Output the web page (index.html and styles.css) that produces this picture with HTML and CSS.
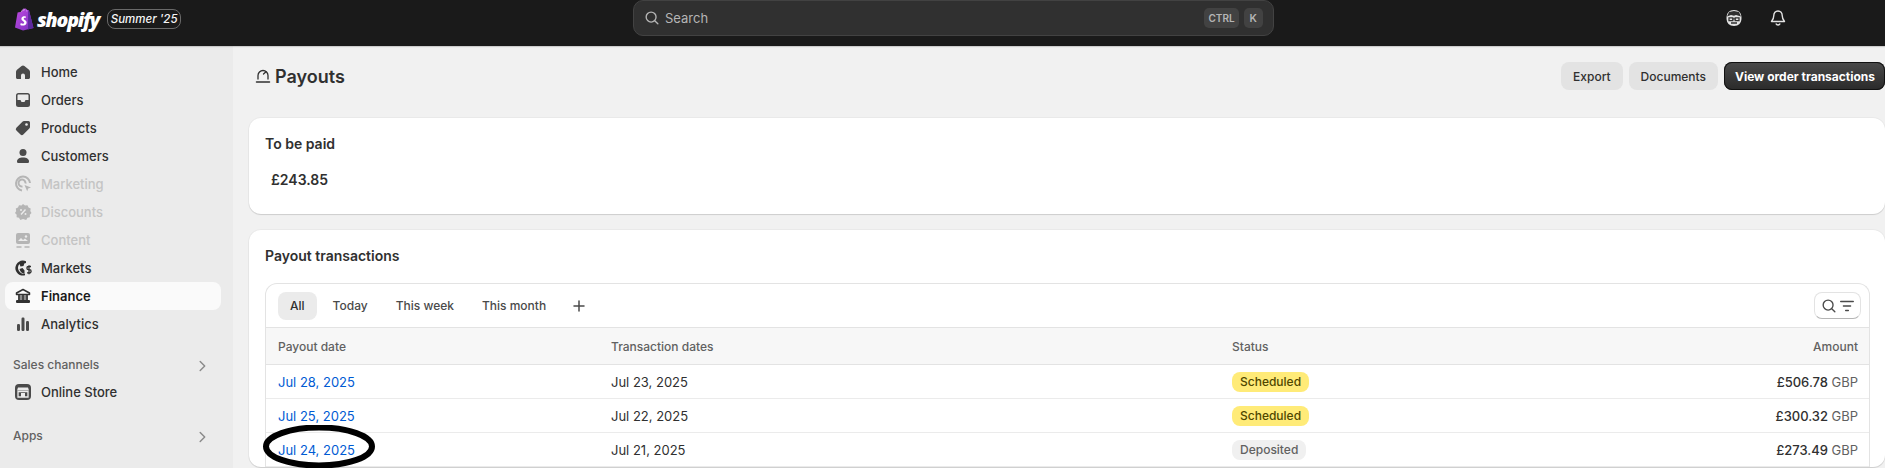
FILE: index.html
```html
<!DOCTYPE html>
<html>
<head>
    <title>Payouts</title>
    <link rel="stylesheet" href="styles.css">
</head>
<body>
    <header class="topbar">
        <div class="brand">
            <svg class="bag" viewBox="0 0 20 23" width="20" height="23">
                <defs>
                    <linearGradient id="bagFill" x1="0" y1="0" x2="1" y2="1">
                        <stop offset="0" stop-color="#c04be0"/>
                        <stop offset="1" stop-color="#7a2fc0"/>
                    </linearGradient>
                </defs>
                <path d="M1 19.500 3.600 4.600c2-.7 3.300-1 4-1.200C8.500 1.500 9.800.5 11 .5c1 0 1.700.6 2.200 1.500l1 .1c.4 0 .7.200.8.500L19.500 20 9 22.500z" fill="url(#bagFill)"/>
                <path d="M14.200 2.100 15 2.600 19.500 20 14 21.500z" fill="#5d2a9e"/>
                <path d="M7.500 4c.3-1.700 1.500-3 2.700-3M9.500 3c.3-.8.800-1.500 1.400-1.700M12.300 1.800c.4.600.6 1.200.6 1.800" fill="none" stroke="#d9a6ee" stroke-width=".8"/>
                <path d="M11.800 8.600c-.7-.4-3.800-.8-4.400 1.800-.4 2.500 3.400 2.900 2.800 4.600-.3 1-2.100.8-3.400 0l-.5 2c1.800 1 5.700 1 6.300-2.100.5-2.900-3.200-3-2.900-4.500.2-.8 1.400-.7 2.100-.3z" fill="#fff"/>
            </svg>
            <span class="wordmark">shopify</span>
            <span class="edition">Summer '25</span>
        </div>
        <div class="search">
            <svg viewBox="0 0 20 20" width="18" height="18" fill="none" stroke="#b5b5b5" stroke-width="1.500" stroke-linecap="round"><circle cx="9" cy="9" r="5.500"/><path d="m13 13 3.500 3.500"/></svg>
            <span class="search-label">Search</span>
            <span class="key key-ctrl">CTRL</span>
            <span class="key">K</span>
        </div>
        <div class="top-icons">
            <svg viewBox="0 0 20 20" width="20" height="20"><path d="M10 2c4.600 0 7.500 2.800 7.500 8s-2.900 8-7.500 8-7.500-2.800-7.500-8 2.900-8 7.500-8z" fill="#e3e3e3"/><path d="M3 8.500 5 4l5-1 5 1 2 4.500-5-1.500-2 .8-3-.8z" fill="#303030"/><path d="M5 9.800h3.800v2.800H5zM11.200 9.800H15v2.800h-3.800zM8.800 10.800h2.400M7 15h6" fill="none" stroke="#303030" stroke-width="1.300"/></svg>
            <svg viewBox="0 0 20 20" width="20" height="20" fill="none" stroke="#e3e3e3" stroke-width="1.400" stroke-linejoin="round" stroke-linecap="round"><path d="M10 3c-2.600 0-4.200 2-4.200 4.500 0 3-.8 4.200-2.300 6h13c-1.500-1.800-2.300-3-2.300-6C14.200 5 12.600 3 10 3z"/><path d="M8.200 16c.4 1.300 3.200 1.300 3.600 0"/></svg>
        </div>
    </header>

    <div class="frame">
        <nav class="sidebar">
            <a class="nav-item">
                <svg viewBox="0 0 20 20" width="20" height="20"><path d="M10 3.500c-.5 0-1 .2-1.400.5L4 7.800c-.6.500-1 1.200-1 2v5.700c0 .8.700 1.500 1.500 1.500H8v-3.500a2 2 0 0 1 4 0V17h3.500c.8 0 1.500-.7 1.500-1.500V9.800c0-.8-.4-1.500-1-2L11.400 4c-.4-.3-.9-.5-1.400-.5z" fill="#4a4a4a"/></svg>
                Home
            </a>
            <a class="nav-item">
                <svg viewBox="0 0 20 20" width="20" height="20"><path d="M5.500 3h9A2.500 2.500 0 0 1 17 5.500v9a2.500 2.500 0 0 1-2.500 2.500h-9A2.500 2.500 0 0 1 3 14.500v-9A2.500 2.500 0 0 1 5.500 3z" fill="#4a4a4a"/><path d="M5.500 4.500h9c.6 0 1 .4 1 1V10H13a1 1 0 0 0-1 1 1 1 0 0 1-1 1H9a1 1 0 0 1-1-1 1 1 0 0 0-1-1H4.500V5.500c0-.6.400-1 1-1z" fill="#ebebeb"/></svg>
                Orders
            </a>
            <a class="nav-item">
                <svg viewBox="0 0 20 20" width="20" height="20"><path d="M11 3h4.500A1.500 1.500 0 0 1 17 4.500V9c0 .6-.2 1.200-.7 1.600l-6 6a2 2 0 0 1-2.800 0l-4.100-4.100a2 2 0 0 1 0-2.800l6-6C9.800 3.200 10.400 3 11 3z" fill="#4a4a4a"/><circle cx="13.500" cy="6.500" r="1.300" fill="#ebebeb"/></svg>
                Products
            </a>
            <a class="nav-item">
                <svg viewBox="0 0 20 20" width="20" height="20"><circle cx="10" cy="6.500" r="3.500" fill="#4a4a4a"/><path d="M4 15.500c0-2.500 2.500-4 6-4s6 1.500 6 4c0 1-.7 1.500-1.500 1.500h-9C4.700 17 4 16.500 4 15.500z" fill="#4a4a4a"/></svg>
                Customers
            </a>
            <a class="nav-item nav-off">
                <svg viewBox="0 0 20 20" width="20" height="20" fill="none" stroke="#b5b5b5" stroke-width="2"><path d="M9 16.500A7 7 0 1 1 17 9"/><path d="M9.500 12.500a3.500 3.500 0 1 1 3-3"/><path d="m11.500 11 6.500 2.500-2.800 1-1 2.800z" fill="#b5b5b5" stroke="none"/></svg>
                Marketing
            </a>
            <a class="nav-item nav-off">
                <svg viewBox="0 0 20 20" width="20" height="20"><path d="m10 2 2 1.400 2.500-.2 1 2.300 2.200 1.100-.4 2.400L18.500 11l-1.700 1.800.1 2.400-2.400.6-1.300 2.100L10 17l-2.700 1-1.300-2.200-2.400-.6.100-2.400L2 11l1.200-2-.4-2.400L5 5.500l1-2.300 2.500.2z" fill="#b5b5b5"/><path d="m8 12.500 4.500-5" stroke="#ebebeb" stroke-width="1.400"/><circle cx="8" cy="8" r="1" fill="#ebebeb"/><circle cx="12.500" cy="12" r="1" fill="#ebebeb"/></svg>
                Discounts
            </a>
            <a class="nav-item nav-off">
                <svg viewBox="0 0 20 20" width="20" height="20"><path d="M5 3h10a2 2 0 0 1 2 2v7a2 2 0 0 1-2 2H5a2 2 0 0 1-2-2V5a2 2 0 0 1 2-2z" fill="#b5b5b5"/><path d="m5 11 3-3 2 2 2-1.500 3 2.500z" fill="#ebebeb"/><circle cx="13" cy="6.500" r="1.200" fill="#ebebeb"/><path d="M3.500 17h5M11.500 17h5" stroke="#b5b5b5" stroke-width="1.500"/></svg>
                Content
            </a>
            <a class="nav-item">
                <svg viewBox="0 0 20 20" width="20" height="20"><path d="M13 3.300A7.500 7.500 0 1 0 12 17.300v-1.600a6 6 0 0 1-5.500-9.800l1 2.600 3-.5.800-2.500 1.700-.6z" fill="#303030"/><path d="M6.500 11l3-1 2 2.500v3.200A6 6 0 0 1 6.500 11z" fill="#303030"/><path d="M18 8.500h-2.500a1.500 1.500 0 0 0 0 3.200h1a1.500 1.500 0 0 1 0 3.200H14M16 7.300v9" fill="none" stroke="#303030" stroke-width="1.300"/></svg>
                Markets
            </a>
            <a class="nav-item nav-active">
                <svg viewBox="0 0 20 20" width="20" height="20"><path d="M10 3.500 16.500 7v1.500h-13V7z" fill="none" stroke="#303030" stroke-width="1.500" stroke-linejoin="round"/><rect x="5" y="9" width="10" height="5" fill="#8a8a8a"/><path d="M6 9v5M10 9v5M14 9v5" stroke="#303030" stroke-width="1.500"/><rect x="3" y="14" width="14" height="3" rx="1" fill="#303030"/></svg>
                Finance
            </a>
            <a class="nav-item">
                <svg viewBox="0 0 20 20" width="20" height="20" fill="#4a4a4a"><rect x="4" y="10" width="3" height="7" rx="1.200"/><rect x="8.500" y="3.500" width="3" height="13.500" rx="1.200"/><rect x="13" y="7" width="3" height="10" rx="1.200"/></svg>
                Analytics
            </a>
            <div class="nav-group">
                Sales channels
                <svg viewBox="0 0 20 20" width="18" height="18" fill="none" stroke="#8a8a8a" stroke-width="1.600" stroke-linecap="round" stroke-linejoin="round"><path d="m8 5 5 5-5 5"/></svg>
            </div>
            <a class="nav-item">
                <svg viewBox="0 0 20 20" width="20" height="20"><rect x="2" y="2" width="16" height="16" rx="4" fill="#4a4a4a"/><path d="M5 5.500h10l1 3H4z" fill="#ebebeb"/><path d="M5 9.500h10V15H5z" fill="none" stroke="#ebebeb" stroke-width="1.300"/><rect x="8" y="11" width="4" height="4" fill="#ebebeb"/></svg>
                Online Store
            </a>
            <div class="nav-group nav-group-apps">
                Apps
                <svg viewBox="0 0 20 20" width="18" height="18" fill="none" stroke="#8a8a8a" stroke-width="1.600" stroke-linecap="round" stroke-linejoin="round"><path d="m8 5 5 5-5 5"/></svg>
            </div>
        </nav>

        <main class="content">
            <div class="page-head">
                <h1 class="page-title">
                    <svg viewBox="0 0 16 16" width="16" height="16" fill="none" stroke="#303030" stroke-width="1.300" stroke-linecap="round"><path d="M3 11V7.500a5 5 0 0 1 10 0V11"/><path d="M8.500 6 11 3.700"/><path d="M1.500 14h13" stroke-width="1.500"/></svg>
                    Payouts
                </h1>
                <div class="page-actions">
                    <button class="btn">Export</button>
                    <button class="btn">Documents</button>
                    <button class="btn btn-dark">View order transactions</button>
                </div>
            </div>

            <section class="card card-paid">
                <h2 class="card-title">To be paid</h2>
                <div class="balance">£243.85</div>
            </section>

            <section class="card">
                <h2 class="card-title">Payout transactions</h2>
                <div class="table-box">
                    <div class="tabs">
                        <span class="tab tab-on">All</span>
                        <span class="tab">Today</span>
                        <span class="tab">This week</span>
                        <span class="tab">This month</span>
                        <svg class="tab-add" viewBox="0 0 20 20" width="20" height="20" fill="none" stroke="#4a4a4a" stroke-width="1.500" stroke-linecap="round"><path d="M10 5v10M5 10h10"/></svg>
                        <button class="filter">
                            <svg viewBox="0 0 20 20" width="18" height="18" fill="none" stroke="#4a4a4a" stroke-width="1.500" stroke-linecap="round"><circle cx="9" cy="9" r="5.500"/><path d="m13 13 3.500 3.500"/></svg>
                            <svg viewBox="0 0 20 20" width="18" height="18" fill="none" stroke="#4a4a4a" stroke-width="1.500" stroke-linecap="round"><path d="M3 5h14M6 10h8M8.500 15h3"/></svg>
                        </button>
                    </div>
                    <div class="row row-head">
                        <span>Payout date</span>
                        <span>Transaction dates</span>
                        <span>Status</span>
                        <span class="amount">Amount</span>
                    </div>
                    <div class="row">
                        <a class="date-link">Jul 28, 2025</a>
                        <span>Jul 23, 2025</span>
                        <span><span class="badge badge-scheduled">Scheduled</span></span>
                        <span class="amount">£506.78 <span class="currency">GBP</span></span>
                    </div>
                    <div class="row">
                        <a class="date-link">Jul 25, 2025</a>
                        <span>Jul 22, 2025</span>
                        <span><span class="badge badge-scheduled">Scheduled</span></span>
                        <span class="amount">£300.32 <span class="currency">GBP</span></span>
                    </div>
                    <div class="row">
                        <a class="date-link">Jul 24, 2025</a>
                        <span>Jul 21, 2025</span>
                        <span><span class="badge badge-deposited">Deposited</span></span>
                        <span class="amount">£273.49 <span class="currency">GBP</span></span>
                    </div>
                </div>
            </section>
        </main>
    </div>

    <!-- hand drawn circle someone put on top of the screenshot -->
    <svg class="scribble" viewBox="0 0 120 48" width="120" height="48" fill="none" stroke="#000" stroke-width="6">
        <ellipse cx="60" cy="21.500" rx="53" ry="19"/>
    </svg>
</body>
</html>
```

FILE: styles.css
```css
html, body {
    margin: 0;
    height: 468px;
    overflow: hidden;
}
body {
    position: relative;
    font-family: Inter, "Liberation Sans", sans-serif;
    font-size: 13px;
    font-weight: 400;
    color: #303030;
    background-color: #f1f1f1;
}
h1, h2 {
    margin: 0;
}

.topbar {
    height: 46px;
    background-color: #1a1a1a;
    display: flex;
    align-items: center;
    box-shadow: 0 1px 1px rgba(0, 0, 0, 0.15);
    position: relative;
}
.brand {
    width: 633px;
    display: flex;
    align-items: center;
    padding-left: 14px;
    box-sizing: border-box;
    align-self: flex-start;
    height: 38px;
}
.bag {
    flex: none;
}
.wordmark {
    margin-left: 3px;
    margin-right: 8px;
    font-family: "Open Sans", sans-serif;
    font-size: 19.500px;
    font-weight: 800;
    font-style: italic;
    letter-spacing: -1.200px;
    color: #fff;
}
.edition {
    height: 20px;
    width: 74px;
    box-sizing: border-box;
    border: 1px solid #6a6a6a;
    border-radius: 8px;
    display: flex;
    align-items: center;
    justify-content: center;
    font-size: 11.500px;
    font-style: italic;
    font-weight: 500;
    color: #f5f5f5;
}
.search {
    width: 641px;
    height: 36px;
    align-self: flex-start;
    box-sizing: border-box;
    padding: 0 10px 0 9px;
    display: flex;
    align-items: center;
    background-color: #303030;
    border: 1px solid #424242;
    border-radius: 10px;
    color: #b5b5b5;
}
.search-label {
    margin-left: 4px;
    flex: 1;
}
.key {
    height: 20px;
    padding: 0 6px;
    margin-left: 5px;
    display: flex;
    align-items: center;
    background-color: #424242;
    border-radius: 5px;
    font-size: 10.500px;
    font-weight: 600;
}
.key-ctrl {
    padding: 0 4px;
    font-size: 10px;
}
.top-icons {
    margin-left: 450px;
    display: flex;
    gap: 24px;
    align-self: flex-start;
    padding-top: 8px;
}

.frame {
    display: flex;
    height: 422px;
}
.sidebar {
    width: 233px;
    flex: none;
    box-sizing: border-box;
    padding: 12px 12px 0 5px;
    background-color: #ebebeb;
}
.nav-item {
    height: 28px;
    padding-left: 8px;
    width: 216px;
    box-sizing: border-box;
    display: flex;
    align-items: center;
    gap: 8px;
    border-radius: 8px;
    font-weight: 500;
    color: #303030;
}
.nav-off {
    color: #c4c4c4;
}
.nav-active {
    background-color: #fafafa;
    font-weight: 600;
    color: #1a1a1a;
}
.nav-group {
    width: 216px;
    box-sizing: border-box;
    padding: 0 10px 0 8px;
    height: 24px;
    margin-top: 14px;
    margin-bottom: 2px;
    display: flex;
    align-items: center;
    justify-content: space-between;
    font-size: 12px;
    font-weight: 550;
    color: #616161;
}
.nav-group svg {
    margin-top: 4px;
}
.nav-group-apps {
    margin-top: 17px;
}

.content {
    flex: 1;
    min-width: 0;
    padding: 16px 0 0 16px;
}
.page-head {
    height: 28px;
    display: flex;
    align-items: center;
    justify-content: space-between;
    margin-bottom: 28px;
}
.page-title {
    display: flex;
    align-items: center;
    gap: 4px;
    padding-left: 6px;
    font-size: 18px;
    font-weight: 600;
    color: #303030;
}
.page-actions {
    display: flex;
    gap: 6px;
}
.btn {
    height: 28px;
    padding: 0 12px;
    border: 0;
    border-radius: 8px;
    background-color: #e3e3e3;
    font-family: inherit;
    font-size: 12px;
    font-weight: 550;
    color: #303030;
}
.btn-dark {
    width: 161px;
    padding: 0 0 0 1px;
    background: linear-gradient(#4a4a4a, #2a2a2a);
    box-shadow: 0 0 0 1px #111 inset;
    color: #fff;
    font-weight: 650;
}

.card {
    background-color: #fff;
    border-radius: 12px;
    box-shadow: 0 1px 1px rgba(0, 0, 0, 0.12), 0 0 0 1px rgba(0, 0, 0, 0.03);
    padding: 16px 15px 0 16px;
    margin-bottom: 16px;
}
.card-paid {
    height: 96px;
    box-sizing: border-box;
}
.card-title {
    font-size: 14px;
    font-weight: 600;
    line-height: 20px;
    color: #303030;
}
.balance {
    margin: 16px 0 0 6px;
    font-size: 14px;
    font-weight: 600;
    line-height: 20px;
}
.table-box {
    margin-top: 17px;
    border: 1px solid #e3e3e3;
    border-bottom: 0;
    border-radius: 12px 12px 0 0;
}
.tabs {
    height: 44px;
    box-sizing: border-box;
    padding: 0 8px 0 12px;
    display: flex;
    align-items: center;
    gap: 4px;
    font-size: 12px;
    color: #4a4a4a;
    font-weight: 500;
    border-bottom: 1px solid #e3e3e3;
}
.tab {
    height: 28px;
    padding: 0 12px;
    display: flex;
    align-items: center;
    border-radius: 8px;
}
.tab-on {
    background-color: #ebebeb;
    color: #303030;
    font-weight: 550;
}
.tab-add {
    margin-left: 7px;
}
.filter {
    margin-left: auto;
    width: 47px;
    height: 27px;
    padding: 0;
    display: flex;
    align-items: center;
    justify-content: center;
    background-color: #fff;
    border: 1px solid #e3e3e3;
    border-bottom-color: #b5b5b5;
    border-radius: 8px;
}
.row {
    height: 34px;
    box-sizing: border-box;
    padding: 0 11px 0 12px;
    display: grid;
    grid-template-columns: 333px 621px 1fr auto;
    align-items: center;
    border-bottom: 1px solid #ebebeb;
    color: #303030;
}
.row-head {
    height: 37px;
    background-color: #f7f7f7;
    color: #616161;
    font-size: 12px;
    font-weight: 500;
    border-bottom: 1px solid #e3e3e3;
}
.amount {
    text-align: right;
    font-weight: 500;
}
.currency {
    color: #616161;
    font-weight: 400;
}
.date-link {
    color: #005bd3;
}
.badge {
    display: inline-block;
    height: 20px;
    line-height: 20px;
    padding: 0 8px;
    border-radius: 8px;
    font-size: 12px;
    font-weight: 500;
}
.badge-scheduled {
    background-color: #ffeb78;
    color: #4f4700;
}
.badge-deposited {
    background-color: #f0f0f0;
    color: #616161;
}

.scribble {
    position: absolute;
    left: 259px;
    top: 425px;
}
```
